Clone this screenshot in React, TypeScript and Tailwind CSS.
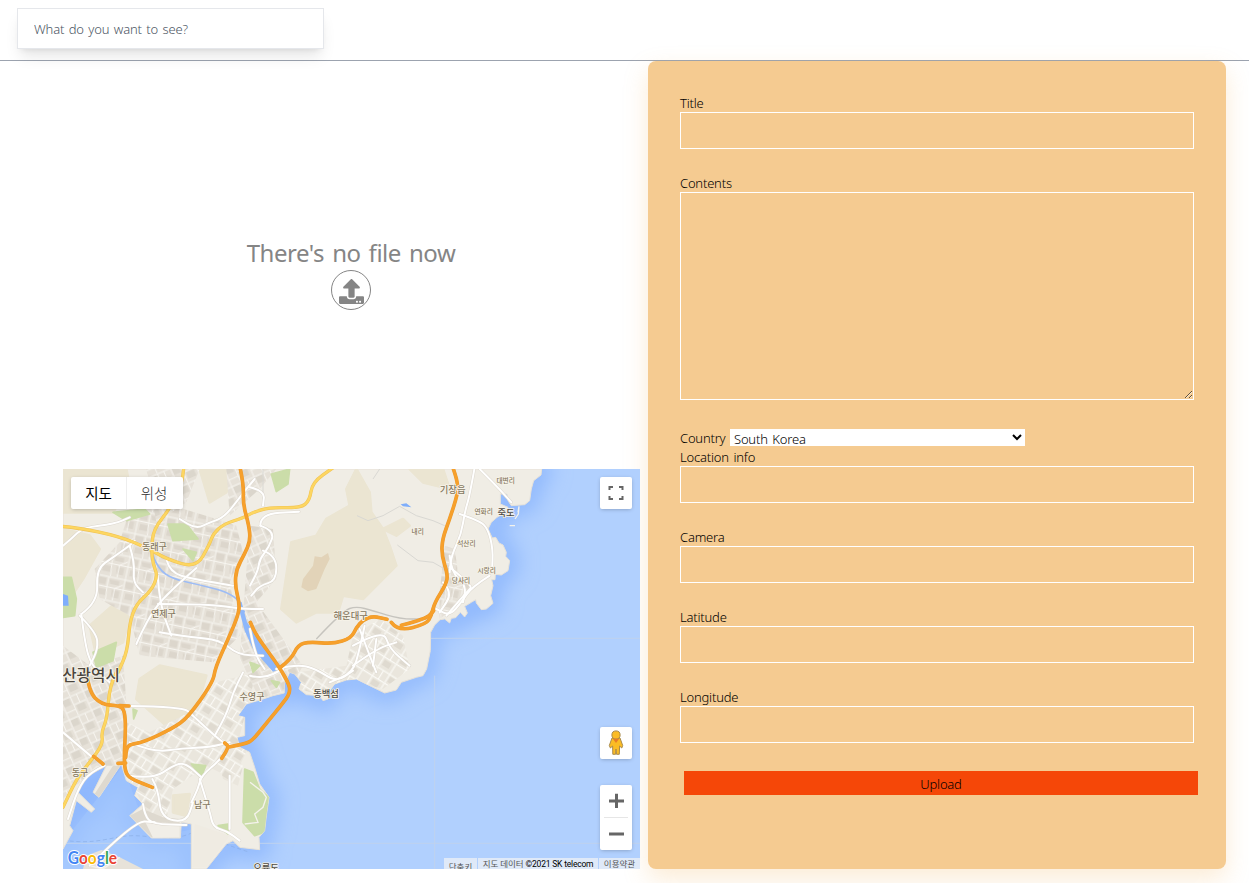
import React from "react";
import { FaUpload } from "react-icons/fa";

const ORANGE_ROADS = [
  "M530 -10 L542 45 L540 105 L558 170 L562 215 L545 255 L520 300 L516 350 L530 405 L525 440 L500 500 L457 595 L450 640 L375 745 L330 778 L240 820 L200 826 L190 840 L188 865",
  "M70 600 L76 665 L115 707 L170 710 L185 725 L188 780 L183 870 L188 915 L210 932 L268 955",
  "M170 710 L198 711",
  "M92 862 L120 885",
  "M165 883 L188 882",
  "M476 868 L500 835 L485 822",
  "M498 834 L550 824 L570 812 L600 775 L670 690 L680 670 L680 650 L650 595 L580 500 L562 460",
  "M650 597 L685 570 L705 528 L740 518 L810 525 L865 507 L880 475 L900 453 L930 441 L972 451",
  "M985 460 L1005 487 L1090 465 L1105 440 L1115 400 L1150 345 L1154 315 L1136 260 L1138 210 L1160 150 L1184 75 L1184 40 L1168 -10",
  "M1015 469 L1090 450 L1112 425",
];

const YELLOW_ROADS = [
  "M-5 172 L40 175 L170 202 L260 240 L310 270 L400 297 L440 225 L450 195 L482 165 L540 147 L570 130 L620 115 L712 117 L740 95 L748 40 L812 -5",
  "M362 -5 L360 40 L320 120 L272 180 L265 240 L270 285 L284 320 L265 365 L220 405 L200 460 L193 548 L165 610",
  "M160 610 L140 650 L132 750 L115 790 L120 825 L80 880 L40 930 L0 1015",
];

const WHITE_ROADS = [
  "M575 30 L545 65 L485 145 L440 160 L400 180 L350 150",
  "M400 297 L345 345 L285 405 L250 460 L220 525",
  "M284 320 L290 405 L325 500",
  "M285 405 L440 405 L535 420 L600 420",
  "M290 490 L380 505 L470 512 L525 558 L600 560",
  "M55 435 L65 520 L85 590 L140 640",
  "M55 435 L105 400 L100 300 L150 265 L200 230 L215 215",
  "M50 440 L100 490 L105 540 L80 590",
  "M0 230 L25 210 L60 175 L155 165 L200 145",
  "M200 230 L215 280 L210 340 L240 370",
  "M310 270 L320 310 L390 330 L510 350",
  "M561 55 L605 65 L600 110",
  "M561 480 L575 555 L605 600",
  "M592 170 L592 135 L708 128",
  "M592 170 L635 185 L618 235 L590 270 L585 305 L561 350",
  "M600 245 L640 260 L640 335 L590 350 L565 380",
  "M200 711 L360 713 L390 740 L455 800 L500 835",
  "M500 835 L475 870 L415 920 L405 960 L385 1000",
  "M200 820 L270 850 L360 838 L440 835 L500 820",
  "M455 800 L490 740 L510 670 L540 610",
  "M195 920 L270 930 L330 890 L365 880 L415 925",
  "M268 930 L285 960 L295 1048 L370 1060 L390 1000",
  "M240 1005 L245 1040 L270 1065 L370 1068",
  "M0 790 L70 850 L95 870",
  "M410 930 L440 1025 L450 1075 L490 1085 L530 1115",
  "M500 920 L500 1080",
  "M125 890 L80 910 L45 960 L15 1050",
  "M80 1190 L215 1055 L275 1060",
  "M561 620 L600 630 L660 600",
  "M640 600 L700 585 L760 600 L820 640 L870 605",
  "M890 480 L920 560 L940 610",
  "M870 530 L960 480 L980 540 L1040 590",
  "M870 590 L940 540 L1000 520",
  "M905 470 L890 540 L870 610 L800 640",
  "M940 510 L930 590",
  "M1235 -5 L1220 80 L1205 130 L1195 195 L1165 260 L1160 310",
  "M1190 135 L1250 155 L1275 180 L1290 240 L1287 310",
  "M1250 0 L1295 45 L1345 100",
  "M1160 295 L1230 350 L1215 365 L1150 440",
  "M1280 320 L1225 355 L1195 400 L1160 440 L1120 420",
  "M1160 260 L1165 310 L1210 350 L1200 400",
  "M1140 340 L1170 370 L1130 430",
];

const URBAN = [
  { d: "M200 120 L330 110 L460 150 L520 170 L540 250 L500 340 L530 500 L450 580 L230 560 L200 440 L110 390 L95 300 L170 220Z", fill: "url(#streetsA)" },
  { d: "M0 530 L80 590 L180 560 L190 700 L190 890 L100 890 L0 990Z", fill: "url(#streetsB)" },
  { d: "M190 760 L260 790 L380 730 L460 640 L580 610 L530 800 L550 850 L510 930 L430 890 L330 960 L310 1050 L250 1030 L200 930Z", fill: "url(#streetsC)" },
  { d: "M560 170 L630 180 L640 330 L580 400 L720 590 L680 660 L590 690 L530 570Z", fill: "url(#streetsB)" },
  { d: "M870 500 L950 450 L1020 500 L1040 600 L960 660 L840 630 L780 680 L710 660 L705 610 L850 590Z", fill: "url(#streetsC)" },
  { d: "M490 0 L640 0 L590 60 L500 140Z M250 0 L410 0 L370 100 L280 160Z", fill: "url(#streetsB)" },
  { d: "M1145 230 L1175 240 L1185 310 L1220 350 L1195 400 L1130 450 L1130 370Z", fill: "url(#streetsA)" },
  { d: "M465 870 L500 840 L540 890 L525 950 L480 930Z", fill: "url(#streetsC)" },
];

const HILLS = [
  "M0 0 L190 0 L200 50 L150 130 L0 130Z",
  "M0 180 L80 200 L110 240 L60 330 L20 390 L0 400Z",
  "M80 470 L160 400 L200 440 L180 520 L100 560Z",
  "M320 430 L410 430 L420 470 L350 490Z",
  "M410 0 L510 0 L490 70 L440 100Z",
  "M880 0 L920 70 L925 130 L960 180 L980 230 L1000 290 L950 340 L900 390 L840 380 L825 430 L760 430 L700 460 L655 420 L685 220 L760 200 L790 150 L860 110 L850 60Z",
  "M1040 0 L1140 0 L1160 60 L1080 40Z",
  "M960 180 L1020 150 L1040 170 L1000 200Z",
  "M230 630 L290 590 L430 620 L400 720 L310 770 L220 690Z",
  "M380 810 L450 780 L480 830 L420 900Z",
  "M330 980 L380 975 L370 1040 L330 1030Z",
  "M0 750 L60 760 L70 820 L20 840Z",
];

const PARKS = [
  "M150 130 L245 120 L260 135 L190 155Z",
  "M315 165 L370 165 L405 210 L330 215Z",
  "M360 240 L400 250 L390 275Z",
  "M0 325 L25 325 L40 390 L35 440 L0 445Z",
  "M90 550 L160 520 L150 575 L100 595Z",
  "M625 15 L680 0 L675 45 L640 68Z",
  "M545 900 L570 910 L590 960 L617 985 L605 1090 L575 1100 L540 1060Z",
  "M385 885 L428 890 L415 925Z",
  "M465 1070 L495 1065 L495 1095Z",
  "M210 720 L222 725 L212 750Z",
  "M561 580 L590 590 L570 610Z",
  "M625 635 L650 640 L640 655Z",
];

const COAST =
  "M0 0 L1436 0 L1434 18 L1412 35 L1405 60 L1400 95 L1385 107 L1345 110 L1335 95 L1332 75 L1312 75 L1312 105 L1335 115 L1330 128 L1302 145 L1285 160 L1275 180 L1288 207 L1298 205 L1308 222 L1320 228 L1330 250 L1328 262 L1340 275 L1335 305 L1315 318 L1297 316 L1296 332 L1286 332 L1290 350 L1283 380 L1290 403 L1270 420 L1255 422 L1240 402 L1238 392 L1225 400 L1205 412 L1213 432 L1205 444 L1192 430 L1178 446 L1165 448 L1160 462 L1145 450 L1131 452 L1115 468 L1103 490 L1102 545 L1091 600 L1080 620 L1060 625 L1015 640 L1000 663 L965 672 L920 650 L880 630 L850 633 L815 645 L800 665 L795 690 L780 695 L770 680 L730 677 L708 660 L715 640 L695 615 L680 610 L664 645 L664 672 L630 680 L600 690 L550 705 L525 740 L545 745 L545 800 L522 805 L530 835 L560 850 L575 895 L590 945 L618 985 L610 1040 L605 1085 L588 1105 L590 1142 L530 1135 L510 1115 L490 1125 L430 1200 L385 1200 L385 1065 L355 1060 L352 1107 L265 1107 L200 1040 L240 1005 L215 980 L225 955 L190 935 L175 885 L108 985 L90 970 L130 890 L65 925 L45 970 L95 1020 L85 1030 L40 995 L20 1070 L30 1085 L0 1140Z";

const LABELS = [
  { t: "동래구", x: 274, y: 243, s: 27 }, { t: "연제구", x: 301, y: 444, s: 27 },
  { t: "해운대구", x: 863, y: 449, s: 28 }, { t: "내리", x: 1064, y: 195, s: 20 },
  { t: "기장읍", x: 1169, y: 71, s: 28 }, { t: "대변리", x: 1328, y: 42, s: 20 },
  { t: "연화리", x: 1262, y: 135, s: 20 }, { t: "석산리", x: 1210, y: 232, s: 20 },
  { t: "시랑리", x: 1271, y: 313, s: 20 }, { t: "당사리", x: 1194, y: 343, s: 20 },
  { t: "수영구", x: 567, y: 694, s: 27 }, { t: "동구", x: 51, y: 920, s: 27 },
  { t: "남구", x: 418, y: 1016, s: 27 },
];
const DARK_LABELS = [
  { t: "죽도", x: 1329, y: 140, s: 28 }, { t: "동백섬", x: 789, y: 684, s: 28 },
  { t: "오륙도", x: 609, y: 1207, s: 28 },
];

// Rounds every corner of an "M x y L x y ..." polyline with quadratic curves.
function smooth(d: string) {
  const n = (d.match(/-?\d+/g) ?? []).map(Number);
  const p: number[][] = [];
  for (let i = 0; i + 1 < n.length; i += 2) p.push([n[i], n[i + 1]]);
  let out = `M${p[0][0]} ${p[0][1]}`;
  for (let i = 1; i < p.length - 1; i++) {
    const mx = (p[i][0] + p[i + 1][0]) / 2;
    const my = (p[i][1] + p[i + 1][1]) / 2;
    out += ` Q${p[i][0]} ${p[i][1]} ${mx} ${my}`;
  }
  const last = p[p.length - 1];
  return `${out} L${last[0]} ${last[1]}`;
}

function Roads({ paths, color, width }: { paths: string[]; color: string; width: number }) {
  return (
    <g fill="none" stroke={color} strokeWidth={width} strokeLinejoin="round" strokeLinecap="round">
      {paths.map((d) => <path key={d} d={smooth(d)} />)}
    </g>
  );
}

function MapDrawing() {
  return (
    <svg viewBox="0 0 1731 1200" className="block h-[400px] w-[577px]">
      <defs>
        <pattern id="streetsA" width="83" height="71" patternUnits="userSpaceOnUse" patternTransform="rotate(12)">
          <rect width="83" height="71" fill="#e6e1d8" /><path d="M5 8H30V28H8Z M40 10H70V24H44Z M12 42H38V60H12Z M52 40H76V62H56Z" fill="#dcd6cc" /><path d="M0 3H83M3 0V71M36 3V34L40 71M0 34H83M60 34V71M60 34L83 20" fill="none" stroke="#f7f5f0" strokeWidth="3" />
        </pattern>
        <pattern id="streetsB" width="73" height="63" patternUnits="userSpaceOnUse" patternTransform="rotate(-24)">
          <rect width="73" height="63" fill="#e6e1d8" /><path d="M6 6H28V26H6Z M40 34H66V54H40Z" fill="#dbd6cc" /><path d="M0 3H73M3 0V63M34 3V63M34 30H73M3 44H34M54 3V30" fill="none" stroke="#f7f5f0" strokeWidth="3" />
        </pattern>
        <pattern id="streetsC" width="77" height="67" patternUnits="userSpaceOnUse" patternTransform="rotate(32)">
          <rect width="77" height="67" fill="#eae6dd" /><path d="M8 8H32V26H8Z M44 40H68V58H44Z" fill="#dfdad0" /><path d="M0 3H77M3 0V67M38 3V67M3 34H77M58 3V34" fill="none" stroke="#fbfaf6" strokeWidth="3.5" />
        </pattern>
        <filter id="shallow" x="-15%" y="-15%" width="130%" height="130%"><feGaussianBlur stdDeviation="30" /></filter>
        <filter id="soft"><feGaussianBlur stdDeviation="2" /></filter>
        <clipPath id="land"><path d={COAST} /></clipPath>
      </defs>
      <rect width="1731" height="1200" fill="#b1d0fe" />
      <path d={COAST} fill="none" stroke="#8fb8fd" strokeWidth="54" filter="url(#shallow)" />
      <path d="M0 1120 L180 890 L260 1110 L390 1080 L390 1200 L0 1200Z" fill="#9fc4fe" opacity="0.65" />
      <path d="M0 1123H1731M1115 620V1200M1075 508H1731" stroke="#bfd2ee" strokeWidth="3" />
      <path d="M0 1113 C100 1130 150 1100 210 1100 S330 1120 390 1090 M430 1100 L500 1130 L560 1150" fill="none" stroke="#8aaee5" strokeWidth="2" strokeDasharray="12 8" />
      <path d={COAST} fill="#f0ede5" stroke="#e7e2d9" strokeWidth="3" />
      <path d="M60 1200 L70 1160 L115 1143 L170 1165 L240 1200Z" fill="#e7e2d9" />
      <g clipPath="url(#land)">
        <g filter="url(#soft)">
          {HILLS.map((d) => <path key={d} d={d} fill="#ebe5d2" stroke="#ebe5d2" strokeWidth="8" strokeLinejoin="round" />)}
          {URBAN.map((u) => <path key={u.d} d={u.d} fill={u.fill} />)}
          {PARKS.map((d) => <path key={d} d={d} fill="#cbdda9" stroke="#cbdda9" strokeWidth="5" strokeLinejoin="round" />)}
        </g>
        <path d="M720 330 L750 290 L755 262 L775 265 L795 252 L800 270 L785 300 L760 360 L735 367 L715 355Z" fill="#e2d3b8" />
        <path d="M395 1065 L500 1100 L430 1195 L388 1195Z" fill="#efebe2" />
        <path d="M200 1040 L240 1020 L300 1045 L350 1050 L350 1105 L265 1105Z M95 975 L150 890 L178 890 L108 985Z" fill="#ded9cf" />
        <path d="M245 1055 L350 1065 L350 1105 L270 1106Z" fill="#f1eee7" />
      </g>
      <path d={smooth("M270 260 L285 300 L330 330 L400 345 L515 375 L545 430")} fill="none" stroke="#9dbcf5" strokeWidth="5" />
      <path d="M520 390 L536 400 L552 460 L600 530 L650 600 L630 608 L570 540 L545 485Z" fill="#8db7fb" />
      <path d="M0 375 L15 380 L17 410 L0 410Z M1013 106 L1030 103 L1045 115 L1020 112Z" fill="#7faefb" />
      <path d="M882 140 L915 155 L960 140 L1010 112 L1060 140 L1110 155 L1145 170 M1003 228 L1065 275 L1110 280 L1145 300 M930 30 L950 0 M600 0 L600 90" fill="none" stroke="#d9d8d3" strokeWidth="3" />
      <path d={smooth("M760 510 L840 425 L880 412 L930 425 L1010 450 L1090 450")} fill="none" stroke="#c6c4be" strokeWidth="4" />
      <Roads paths={WHITE_ROADS} color="#ddd8cf" width={9} />
      <Roads paths={WHITE_ROADS} color="#ffffff" width={6} />
      <path d="M561 940 L600 970 L610 985 L600 1015 L575 1035 L585 1060 L545 1065 M80 1190 L120 1200 L170 1165 M1365 130 L1368 112 L1366 135 L1356 150 M1340 170H1356" fill="none" stroke="#f4f2ec" strokeWidth="4" />
      <Roads paths={YELLOW_ROADS} color="#efc254" width={10} />
      <Roads paths={YELLOW_ROADS} color="#fdd661" width={7} />
      <Roads paths={ORANGE_ROADS} color="#ea9a2e" width={11} />
      <Roads paths={ORANGE_ROADS} color="#f7a02b" width={8} />
      <g textAnchor="middle" fontFamily='"Noto Sans CJK KR", sans-serif' wordSpacing="0" stroke="#f7f3e9" strokeWidth="5" paintOrder="stroke" strokeLinejoin="round">
        {LABELS.map((l) => <text key={l.t} x={l.x} y={l.y} fontSize={l.s} fontWeight="500" fill="#857861">{l.t}</text>)}
        {DARK_LABELS.map((l) => <text key={l.t} x={l.x} y={l.y} fontSize={l.s} fontWeight="500" fill="#4d4a45">{l.t}</text>)}
        <text x="84" y="636" fontSize="47" fontWeight="500" fill="#4a453d">산광역시</text>
      </g>
      <g fontFamily='Lato, sans-serif' fontSize="50" fontWeight="700" stroke="#ffffff" strokeWidth="6" paintOrder="stroke" strokeLinejoin="round">
        <text x="14" y="1184" textLength="148" lengthAdjust="spacingAndGlyphs">
          <tspan fill="#4285f4">G</tspan><tspan fill="#ea4335">o</tspan><tspan fill="#fbbc04">o</tspan><tspan fill="#4285f4">g</tspan><tspan fill="#34a853">l</tspan><tspan fill="#ea4335">e</tspan>
        </text>
      </g>
    </svg>
  );
}

const control = "flex h-8 w-8 items-center justify-center rounded-[2px] bg-white shadow-[0_1px_4px_-1px_rgba(0,0,0,0.3)]";

function MapView() {
  return (
    <div className="relative h-[400px] w-[577px] overflow-hidden font-['Noto_Sans_CJK_KR',sans-serif] font-normal tracking-normal [word-spacing:0px]">
      <MapDrawing />
      <div className="absolute left-2 top-2 flex h-8 rounded-[2px] bg-white text-[14.5px] leading-8 shadow-[0_1px_4px_-1px_rgba(0,0,0,0.3)]">
        <span className="w-[55px] text-center text-black">지도</span>
        <span className="w-[57px] border-l border-[#eeeeee] pr-0.5 text-center font-light text-[#333333]">위성</span>
      </div>
      <div className={`absolute right-2 top-2 ${control}`}>
        <svg viewBox="0 0 18 18" className="h-[18px] w-[18px]" fill="none" stroke="#666" strokeWidth="2"><path d="M2.5 6V3H6M12 3H15.5V6M2.5 12V15H6M12 15H15.5V12" /></svg>
      </div>
      <div className={`absolute right-2 top-[258px] ${control}`}>
        <svg viewBox="0 0 16 26" className="h-[26px] w-4">
          <path d="M4 8 L1.3 15.5 L2.4 18 L4.6 16 L4.8 24.3 H7.6 L8 19 L8.5 24.3 H11.3 L11.6 16 L13.8 18 L14.7 15.5 L12 8Z" fill="#fbbc24" stroke="#a98b4c" strokeWidth="1" />
          <circle cx="8" cy="5" r="4.1" fill="#fbbc24" stroke="#a98b4c" strokeWidth="1" />
          <path d="M4.8 8.8 H11.2 L8 13Z" fill="#e67d28" />
        </svg>
      </div>
      <div className="absolute right-2 top-[316px] flex h-[65px] w-8 flex-col items-center rounded-[2px] bg-white shadow-[0_1px_4px_-1px_rgba(0,0,0,0.3)]">
        <svg viewBox="0 0 32 65" className="h-[65px] w-8"><path d="M9 16H24M16.5 8.8V23M9 49H24" stroke="#666" strokeWidth="3" /><path d="M4 32.5H28" stroke="#e6e6e6" /></svg>
      </div>
      <div className="absolute bottom-0 right-0 flex h-[11px] gap-px overflow-hidden whitespace-nowrap text-[8.5px] leading-[11px] text-[#555]">
        <span className="w-[33px] bg-[#dfe9f8] pt-[3px] text-center">단축키</span>
        <span className="w-[120px] bg-[#dfe9f8] text-center leading-[10px]">지도 데이터 <span className="font-['Roboto'] text-[8.5px] tracking-[-0.2px] text-black">©2021 SK telecom</span></span>
        <span className="w-[41px] bg-[#dfe9f8] text-center leading-[10px]">이용약관</span>
      </div>
    </div>
  );
}

function Field({ label }: { label: string }) {
  return (
    <label className="mb-6 block">
      <span className="block h-[19px] leading-[21px]">{label}</span>
      <input className="block h-[37px] w-full border border-white bg-transparent px-2 outline-none" />
    </label>
  );
}

export default function App() {
  return (
    <div className="h-[883px] overflow-hidden bg-white font-['Noto_Sans','Noto_Sans_CJK_KR',sans-serif] text-[13px] font-[350] tracking-[-0.2px] text-black [word-spacing:1.5px]">
      <header className="h-[61px] border-b border-[#9ca3af] pl-[17px] pt-2">
        <input
          placeholder="What do you want to see?"
          className="block h-[41px] w-[307px] border border-gray-200 bg-white px-4 tracking-[-0.15px] shadow-lg outline-none [word-spacing:1.2px] placeholder:text-[#4b5563]"
        />
      </header>
      <main className="flex pl-[63px]">
        <section className="mr-2 w-[577px]">
          <div className="flex h-[408px] flex-col items-center pr-px pt-[176px] text-[#858585]">
            <p className="h-[33px] whitespace-nowrap text-[24px] font-normal leading-8 tracking-[-0.45px] [word-spacing:2.2px]">There's no file now</p>
            <button className="flex h-10 w-10 items-center justify-center rounded-full border border-[#858585]">
              <FaUpload className="relative top-px h-[25px] w-[25px]" />
            </button>
          </div>
          <MapView />
        </section>
        <form className="h-[808px] w-[578px] rounded-lg bg-[#f5cb91] p-8 shadow-[0_10px_24px_rgba(245,180,90,0.25)]">
          <Field label="Title" />
          <label className="block">
            <span className="block h-[19px] leading-[21px]">Contents</span>
            <textarea className="block h-[208px] w-full resize border border-white bg-transparent outline-none" />
          </label>
          <div className="mt-[29px] flex h-[18px]">
            <span className="w-[50px] leading-[19px]">Country</span>
            <select defaultValue="South Korea" className="h-[17px] w-[295px] bg-white pb-0.5 leading-[15px] [word-spacing:1.5px]">
              <option>South Korea</option>
            </select>
          </div>
          <Field label="Location info" />
          <Field label="Camera" />
          <Field label="Latitude" />
          <Field label="Longitude" />
          <button type="button" className="ml-1 mt-7 block h-6 w-[514px] bg-[#f54708] pt-[2px] leading-[22px]">Upload</button>
        </form>
      </main>
    </div>
  );
}
